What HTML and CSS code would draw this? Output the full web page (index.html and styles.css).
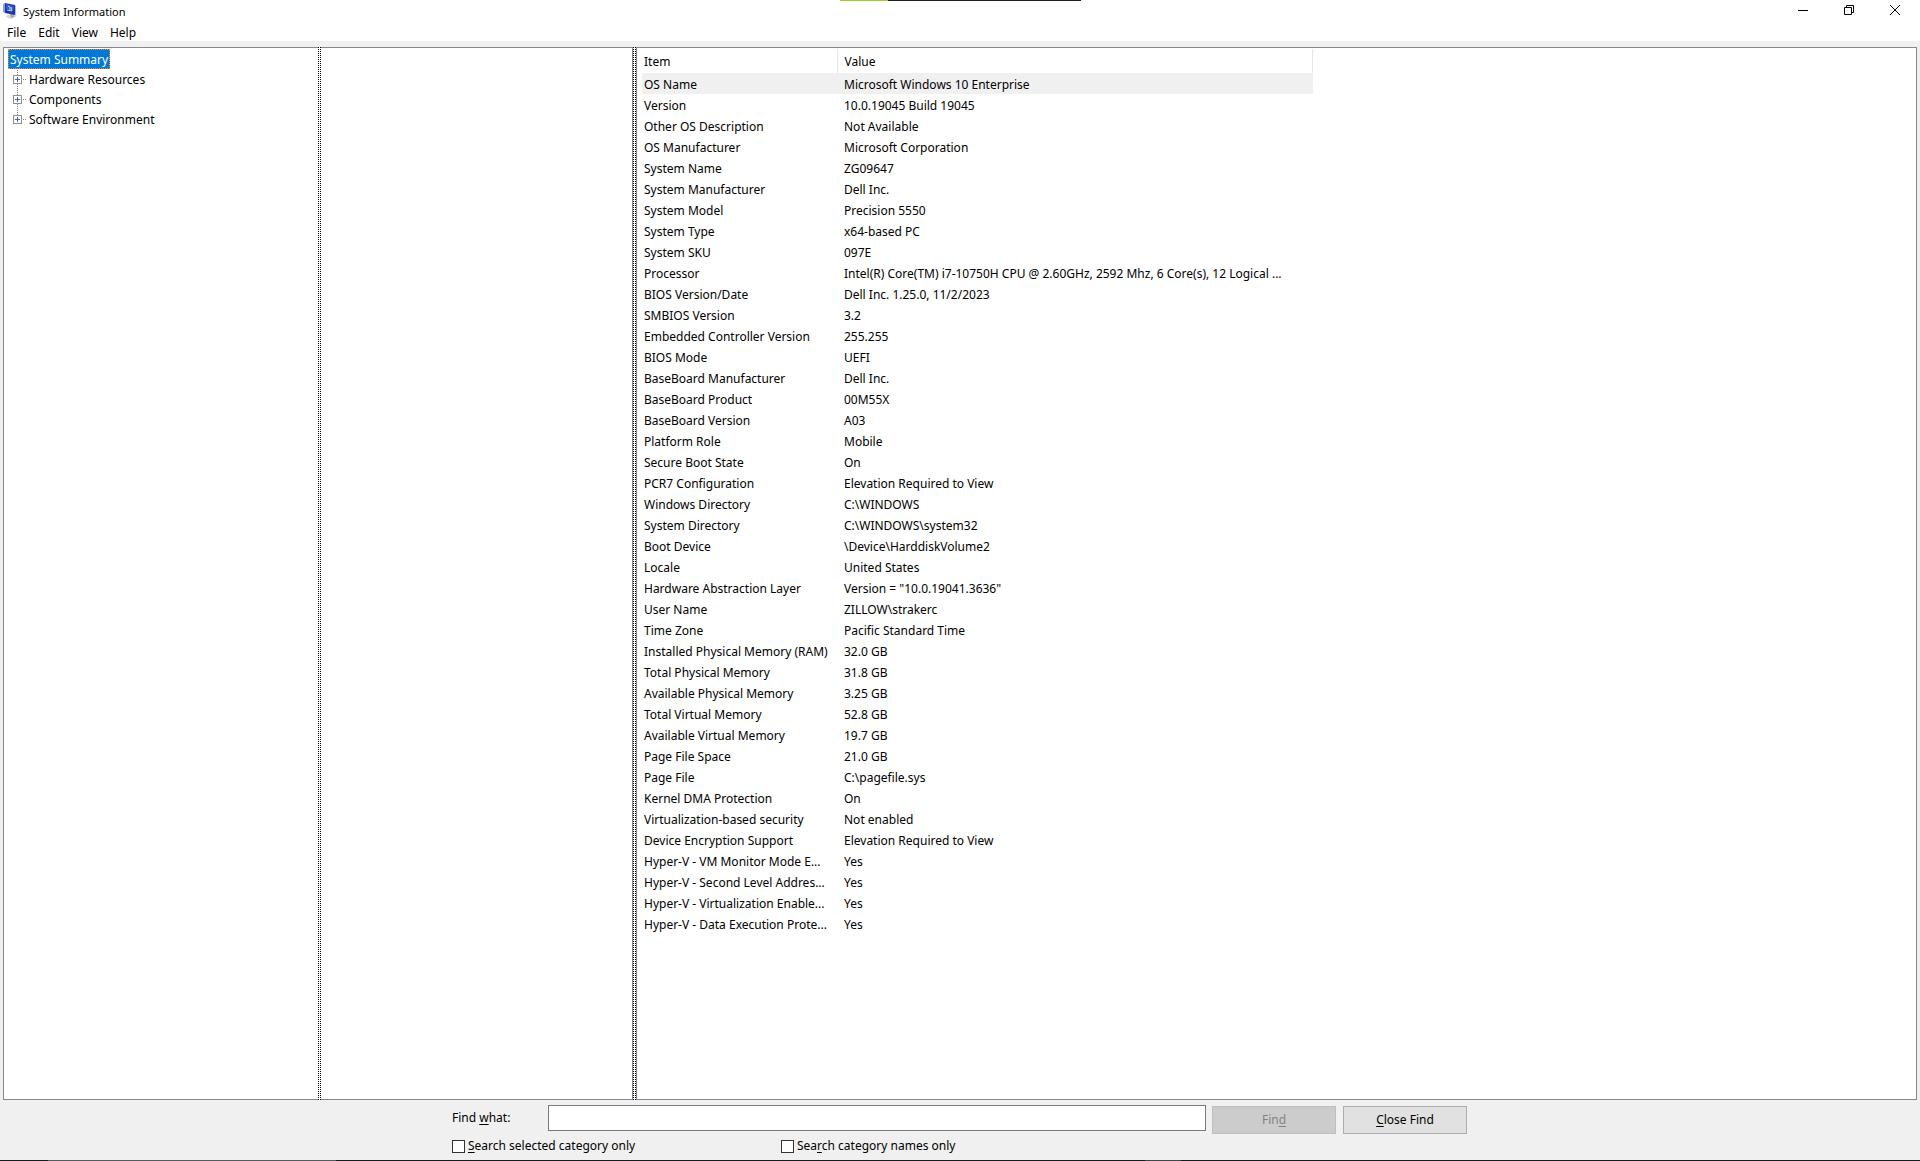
FILE: index.html
```html
<!DOCTYPE html>
<html lang="en">
<head>
    <meta charset="UTF-8">
    <meta name="viewport" content="width=device-width, initial-scale=1.0">
    <title>System Information</title>
    <link rel="stylesheet" href="styles.css">
</head>
<body>
    <div class="screen-edge"></div>
    <header class="title-bar">
        <svg class="app-icon" width="16" height="16" viewBox="0 0 16 16">
            <path d="M5 12l8-1 2 2-6 3-5-2z" fill="#d5d8dc"/>
            <path d="M8 11h4v3l-3 1z" fill="#a3a8b2"/>
            <path d="M1 1l2-1v10l-2-1z" fill="#8e9fd0"/>
            <path d="M3 0l10 2v10L3 10z" fill="#1b36a8"/>
            <path d="M4 1l8 2v4L4 6z" fill="#3455cf"/>
            <path d="M6 3l2 1v3M9 4l1 4M5 7l5 1" fill="none" stroke="#c2d2ff"/>
            <path d="M13 2l1 1v9l-1 0z" fill="#b4bde0"/>
        </svg>
        <h1>System Information</h1>
        <div class="window-buttons">
            <button type="button" aria-label="Minimize">
                <svg width="10" height="10" viewBox="0 0 10 10"><path d="M0 5.5h10"/></svg>
            </button>
            <button type="button" aria-label="Restore">
                <svg width="10" height="10" viewBox="0 0 10 10"><path d="M.5 2.5h7v7h-7zM2.5 2.5v-2h7v7h-2"/></svg>
            </button>
            <button type="button" aria-label="Close">
                <svg width="10" height="10" viewBox="0 0 10 10"><path d="M0 0l10 10M10 0L0 10"/></svg>
            </button>
        </div>
    </header>
    <nav class="menu-bar">
        <button type="button">File</button>
        <button type="button">Edit</button>
        <button type="button">View</button>
        <button type="button">Help</button>
    </nav>

    <main class="panes">
        <section class="pane tree-pane">
            <a href="#" class="tree-root">System Summary</a>
            <ul class="tree">
                <li><button type="button" class="expander" aria-label="Expand"></button><a href="#">Hardware Resources</a></li>
                <li><button type="button" class="expander" aria-label="Expand"></button><a href="#">Components</a></li>
                <li><button type="button" class="expander" aria-label="Expand"></button><a href="#">Software Environment</a></li>
            </ul>
        </section>
        <div class="splitter"></div>
        <section class="pane middle-pane"></section>
        <div class="splitter"></div>
        <section class="pane detail-pane">
            <table>
                <thead>
                    <tr><th class="item">Item</th><th>Value</th></tr>
                </thead>
                <tbody>
                    <tr class="selected"><td>OS Name</td><td>Microsoft Windows 10 Enterprise</td></tr>
                    <tr><td>Version</td><td>10.0.19045 Build 19045</td></tr>
                    <tr><td>Other OS Description</td><td>Not Available</td></tr>
                    <tr><td>OS Manufacturer</td><td>Microsoft Corporation</td></tr>
                    <tr><td>System Name</td><td>ZG09647</td></tr>
                    <tr><td>System Manufacturer</td><td>Dell Inc.</td></tr>
                    <tr><td>System Model</td><td>Precision 5550</td></tr>
                    <tr><td>System Type</td><td>x64-based PC</td></tr>
                    <tr><td>System SKU</td><td>097E</td></tr>
                    <tr><td>Processor</td><td>Intel(R) Core(TM) i7-10750H CPU @ 2.60GHz, 2592 Mhz, 6 Core(s), 12 Logical ...</td></tr>
                    <tr><td>BIOS Version/Date</td><td>Dell Inc. 1.25.0, 11/2/2023</td></tr>
                    <tr><td>SMBIOS Version</td><td>3.2</td></tr>
                    <tr><td>Embedded Controller Version</td><td>255.255</td></tr>
                    <tr><td>BIOS Mode</td><td>UEFI</td></tr>
                    <tr><td>BaseBoard Manufacturer</td><td>Dell Inc.</td></tr>
                    <tr><td>BaseBoard Product</td><td>00M55X</td></tr>
                    <tr><td>BaseBoard Version</td><td>A03</td></tr>
                    <tr><td>Platform Role</td><td>Mobile</td></tr>
                    <tr><td>Secure Boot State</td><td>On</td></tr>
                    <tr><td>PCR7 Configuration</td><td>Elevation Required to View</td></tr>
                    <tr><td>Windows Directory</td><td>C:\WINDOWS</td></tr>
                    <tr><td>System Directory</td><td>C:\WINDOWS\system32</td></tr>
                    <tr><td>Boot Device</td><td>\Device\HarddiskVolume2</td></tr>
                    <tr><td>Locale</td><td>United States</td></tr>
                    <tr><td>Hardware Abstraction Layer</td><td>Version = "10.0.19041.3636"</td></tr>
                    <tr><td>User Name</td><td>ZILLOW\strakerc</td></tr>
                    <tr><td>Time Zone</td><td>Pacific Standard Time</td></tr>
                    <tr><td>Installed Physical Memory (RAM)</td><td>32.0 GB</td></tr>
                    <tr><td>Total Physical Memory</td><td>31.8 GB</td></tr>
                    <tr><td>Available Physical Memory</td><td>3.25 GB</td></tr>
                    <tr><td>Total Virtual Memory</td><td>52.8 GB</td></tr>
                    <tr><td>Available Virtual Memory</td><td>19.7 GB</td></tr>
                    <tr><td>Page File Space</td><td>21.0 GB</td></tr>
                    <tr><td>Page File</td><td>C:\pagefile.sys</td></tr>
                    <tr><td>Kernel DMA Protection</td><td>On</td></tr>
                    <tr><td>Virtualization-based security</td><td>Not enabled</td></tr>
                    <tr><td>Device Encryption Support</td><td>Elevation Required to View</td></tr>
                    <tr><td>Hyper-V - VM Monitor Mode E...</td><td>Yes</td></tr>
                    <tr><td>Hyper-V - Second Level Addres...</td><td>Yes</td></tr>
                    <tr><td>Hyper-V - Virtualization Enable...</td><td>Yes</td></tr>
                    <tr><td>Hyper-V - Data Execution Prote...</td><td>Yes</td></tr>
                </tbody>
            </table>
        </section>
    </main>

    <form class="find-bar">
        <div class="find-row">
            <label class="find-label" for="findWhat">Find <u>w</u>hat:</label>
            <input type="text" id="findWhat">
            <button type="button" disabled>Fin<u>d</u></button>
            <button type="button"><u>C</u>lose Find</button>
        </div>
        <div class="option-row">
            <label><input type="checkbox"><span><u>S</u>earch selected category only</span></label>
            <label><input type="checkbox"><span>Sea<u>r</u>ch category names only</span></label>
        </div>
    </form>
    <footer class="taskbar-edge"></footer>
</body>
</html>
```

FILE: styles.css
```css
* {
    box-sizing: border-box;
}

body {
    display: flex;
    flex-direction: column;
    height: 100vh;
    margin: 0;
    background-color: #f0f0f0;
    color: #000;
    font-family: "Noto Sans", "Segoe UI", sans-serif;
    font-size: 12px;
    line-height: 16px;
}

button {
    font: inherit;
    color: inherit;
}

a {
    color: inherit;
    text-decoration: none;
}

u {
    text-underline-offset: 2px;
}

/* sliver of the window behind, over the top edge */
.screen-edge {
    position: absolute;
    top: 0;
    left: 840px;
    width: 241px;
    height: 1px;
    background: linear-gradient(to right, #9acd32 48px, #1f1f1f 48px);
}

.title-bar {
    display: flex;
    align-items: flex-start;
    height: 23px;
    padding-left: 2px;
    background-color: #fff;
}

.app-icon {
    margin-top: 3px;
}

.title-bar h1 {
    flex: 1;
    margin: 4px 0 0 5px;
    font-size: 11px;
    font-weight: normal;
}

.window-buttons {
    display: flex;
    padding-right: 2px;
}

.window-buttons button {
    display: flex;
    justify-content: center;
    width: 46px;
    padding: 5px 0;
    border: none;
    background: none;
}

.window-buttons path {
    fill: none;
    stroke: #000;
}

.menu-bar {
    display: flex;
    height: 18px;
    padding-left: 1px;
    background-color: #fff;
}

.menu-bar button {
    padding: 2px 6px 0;
    border: none;
    background: none;
}

.panes {
    display: flex;
    flex: 1;
    min-height: 0;
    margin: 6px 3px 0;
}

.pane {
    background-color: #fff;
    border: 1px solid #828790;
}

.tree-pane {
    width: 315px;
    padding: 1px 4px;
    border-right: none;
}

.middle-pane {
    width: 312px;
    border-left: none;
}

.detail-pane {
    flex: 1;
    padding: 1px 5px;
}

.splitter {
    width: 3px;
    background: repeating-conic-gradient(#000 0 25%, #fff 0 100%) 1px 0 / 2px 2px;
}

.tree-root {
    display: block;
    width: fit-content;
    height: 20px;
    padding: 2px 1px 0;
    border: 1px dotted #ff8728;
    background-color: #0078d7;
    color: #fff;
}

.tree {
    margin: 0 0 0 9px;
    padding: 0;
    list-style: none;
}

.tree li {
    display: flex;
    align-items: center;
    height: 20px;
    background: linear-gradient(#fff 50%, #808080 50%) 0 0 / 1px 2px repeat-y;
}

/* the connecting line stops at the last node */
.tree li:last-child {
    background:
        linear-gradient(#fff, #fff) 0 100% / 1px 10px no-repeat,
        linear-gradient(#fff 50%, #808080 50%) 0 0 / 1px 2px repeat-y;
}

.tree li::after {
    content: "";
    order: 1;
    width: 3px;
    height: 1px;
    background: linear-gradient(to right, #808080 1px, #fff 1px 2px, #808080 2px);
}

.expander {
    width: 9px;
    height: 9px;
    margin: 0 1px 0 -4px;
    padding: 0;
    border: 1px solid #919191;
    background:
        linear-gradient(#4b63a7, #4b63a7) center / 5px 1px no-repeat,
        linear-gradient(#4b63a7, #4b63a7) center / 1px 5px no-repeat,
        #fff;
}

.tree a {
    order: 2;
    padding: 1px 0 0 3px;
}

table {
    width: 671px;
    border-collapse: collapse;
    table-layout: fixed;
}

th,
td {
    height: 21px;
    padding: 2px 2px 0;
    overflow: hidden;
    text-align: left;
    font-weight: normal;
    white-space: nowrap;
}

th {
    height: 24px;
    border-right: 1px solid #e5e5e5;
}

.item {
    width: 195px;
}

th + th,
td + td {
    padding-left: 7px;
}

.selected {
    background-color: #f0f0f0;
}

.find-bar {
    padding: 5px 0 0 452px;
}

.find-row {
    display: flex;
    height: 30px;
}

.find-label {
    width: 96px;
    padding-top: 5px;
}

#findWhat {
    width: 658px;
    height: 26px;
    border: 1px solid #7a7a7a;
    background-color: #fff;
    font: inherit;
}

.find-row button {
    width: 124px;
    height: 28px;
    margin: 1px 0 0 6px;
    padding: 0;
    border: 1px solid #adadad;
    background-color: #e1e1e1;
}

.find-row button:disabled {
    margin-right: 1px;
    border-color: #bfbfbf;
    background-color: #ccc;
    color: #838383;
}

.option-row {
    display: flex;
    height: 25px;
}

.option-row label {
    display: flex;
    align-items: center;
    width: 329px;
    height: 22px;
}

.option-row input {
    appearance: none;
    width: 13px;
    height: 13px;
    margin: 0 3px 0 0;
    border: 1px solid #333;
    background-color: #fff;
}

.taskbar-edge {
    height: 1px;
    background: linear-gradient(to right, #1a1a1a 48px, #5a5a5a 48px 336px, #1a1a1a 336px 1145px, #444 1145px 1181px, #1a1a1a 1181px);
}
```
